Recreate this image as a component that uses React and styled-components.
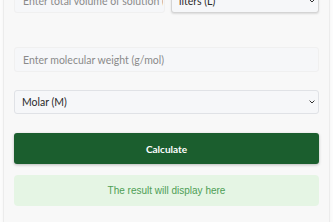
import styled, { createGlobalStyle } from "styled-components"

const Global = createGlobalStyle`
body {
  margin: 0;
  background: #fcfcfc;
  font-family: Lato, "Open Sans", sans-serif;
  overflow: hidden;
}
`

const Page = styled.div`
padding: 0 3px;
`

const Card = styled.div`
margin-top: -23px;
background: #f8f8f8;
border: 1px solid #ececec;
padding: 10px 10px 16px 10px;
box-shadow: 0 0 3px rgba(0,0,0,0.04);
`

const Row = styled.div`
display: grid;
grid-template-columns: ${props => props.$cols || "1fr"};
gap: 6px;
margin-bottom: ${props => props.$gap || 18}px;
`

const Input = styled.input`
width: 100%;
min-width: 0;
height: 25px;
box-sizing: border-box;
padding: 0 1px 0 8px;
border: 1px solid #f0f0f0;
border-radius: 3px;
background: #f6f7f9;
font-family: Lato, sans-serif;
font-size: 10.5px;
color: #333;
outline: none;
&::placeholder {
  color: #8a8a8a;
}
`

const SelectWrap = styled.div`
position: relative;
min-width: 0;
`

const Select = styled.select`
appearance: none;
display: block;
width: 100%;
height: ${props => props.$h || 25}px;
box-sizing: border-box;
padding: 0 0 0 7px;
border: 1px solid ${props => props.$strong ? "#d4d4d4" : "#e0e2e6"};
border-radius: 3px;
background: #f6f7f9;
box-shadow: ${props => props.$strong ? "0 1px 2px rgba(0,0,0,0.12)" : "none"};
font-family: Lato, sans-serif;
font-size: 10.5px;
color: #2a2a2a;
outline: none;
`

const Chevron = styled.svg`
position: absolute;
right: 4px;
top: 50%;
margin-top: -2px;
width: 6px;
height: 4px;
pointer-events: none;
`

const Button = styled.button`
display: block;
width: 100%;
height: 31px;
border: none;
border-radius: 3px;
background: #1b5e2e;
color: #fff;
font-family: Lato, sans-serif;
font-weight: bold;
font-size: 10px;
box-shadow: 0 1px 3px rgba(0,0,0,0.25);
margin-bottom: 11px;
cursor: pointer;
`

const Result = styled.div`
height: 31px;
border-radius: 4px;
background: #e5f5e4;
color: #4e9e55;
font-family: "Liberation Sans", Arial, sans-serif;
font-size: 10px;
display: flex;
align-items: center;
justify-content: center;
`

function Dropdown({ children, strong, h }) {
    return (
        <SelectWrap>
            <Select $strong={strong} $h={h}>{children}</Select>
            <Chevron viewBox="0 0 6 4">
                <path d="M0.6 0.6 L3 3 L5.4 0.6" fill="none" stroke="#333" strokeWidth="1" />
            </Chevron>
        </SelectWrap>
    )
}

export default function App() {
    return (
        <Page>
            <Global />
            <Card>
                <Row $cols="151fr 148fr" $gap={34}>
                    <Input placeholder="Enter total volume of solution (L, mL)" />
                    <Dropdown strong>
                        <option>liters (L)</option>
                        <option>milliliters (mL)</option>
                    </Dropdown>
                </Row>
                <Row>
                    <Input placeholder="Enter molecular weight (g/mol)" />
                </Row>
                <Row $gap={19}>
                    <Dropdown h={24}>
                        <option>Molar (M)</option>
                        <option>Millimolar (mM)</option>
                    </Dropdown>
                </Row>
                <Button>Calculate</Button>
                <Result>The result will display here</Result>
            </Card>
        </Page>
    )
}
